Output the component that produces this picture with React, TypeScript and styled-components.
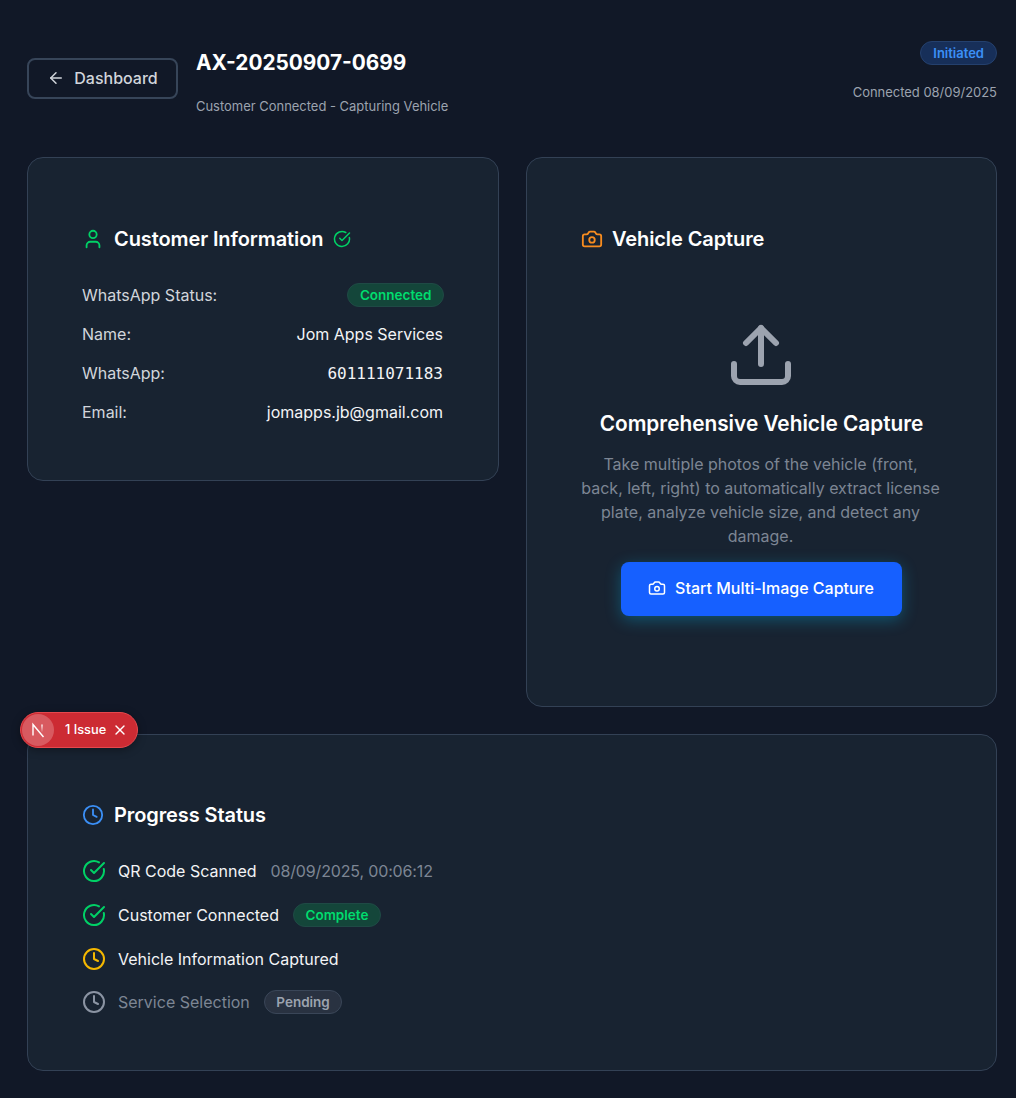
import React from "react";
import styled, { createGlobalStyle } from "styled-components";
import { ArrowLeft, Camera, CircleCheckBig, Clock, Upload, User, X } from "lucide-react";

const GlobalStyle = createGlobalStyle`
  html, body {
    margin: 0;
    padding: 0;
    background: #111827;
  }
  * {
    box-sizing: border-box;
  }
`;

const Page = styled.div`
  width: 1016px;
  height: 1098px;
  padding: 41px 19px 27px 27px;
  background: #111827;
  font-family: Inter, "Liberation Sans", sans-serif;
  color: #ffffff;
  position: relative;
  overflow: hidden;
`;

const Header = styled.header`
  display: flex;
  justify-content: space-between;
  height: 116px;
`;

const HeaderLeft = styled.div`
  display: flex;
  align-items: flex-start;
  gap: 18px;
`;

const BackButton = styled.button`
  width: 151px;
  height: 41px;
  margin-top: 17px;
  padding: 0 0 2px;
  display: flex;
  align-items: center;
  justify-content: center;
  gap: 9px;
  background: transparent;
  border: 2px solid #374559;
  border-radius: 8px;
  color: #d1d5db;
  font-family: inherit;
  font-size: 16px;
  font-weight: 500;
`;

const Title = styled.h1`
  margin: 7px 0 0;
  font-size: 20.8px;
  line-height: 30px;
  font-weight: 700;
`;

const Subtitle = styled.p`
  margin: 20px 0 0;
  font-size: 12.96px;
  line-height: 16px;
  color: #9ca3af;
`;

const HeaderRight = styled.div`
  display: flex;
  flex-direction: column;
  align-items: flex-end;
`;

const Meta = styled.span`
  margin-top: 17px;
  font-size: 12.96px;
  line-height: 20px;
  color: #9ca3af;
`;

const Columns = styled.div`
  display: grid;
  grid-template-columns: 472px 471px;
  gap: 27px;
  align-items: start;
`;

const Card = styled.section<{ $height: number }>`
  height: ${(p) => p.$height}px;
  padding: 66px 54px 0;
  background: #182331;
  border: 1px solid #334155;
  border-radius: 16px;
`;

const ProgressCard = styled(Card)`
  margin-top: 27px;
  padding-top: 65px;
`;

const CardTitle = styled.h2`
  margin: 0;
  height: 30px;
  display: flex;
  align-items: center;
  font-size: 20px;
  font-weight: 600;
  letter-spacing: -0.1px;
`;

const TitleIcon = styled.span<{ $color: string; $gap: number }>`
  display: flex;
  margin-right: ${(p) => p.$gap}px;
  color: ${(p) => p.$color};
`;

const TitleBadge = styled.span`
  display: flex;
  margin-left: 10px;
  color: #00d166;
`;

const InfoList = styled.dl`
  margin: 21px 0 0;
`;

const InfoRow = styled.div`
  height: 39px;
  display: flex;
  align-items: center;
  justify-content: space-between;
`;

const InfoLabel = styled.dt`
  font-size: 16px;
  color: #d1d5db;
`;

const InfoValue = styled.dd`
  margin: 0 1px 0 0;
  font-size: 16px;
  color: #f3f4f6;
`;

const MonoValue = styled(InfoValue)`
  padding-top: 1px;
  font-family: "DejaVu Sans Mono", monospace;
`;

const PillValue = styled.dd`
  margin: 0;
`;

const Pill = styled.span<{ $tone: "green" | "blue" | "gray" }>`
  display: inline-flex;
  align-items: center;
  height: 24px;
  padding: 0 11.5px;
  border-radius: 999px;
  font-size: 13.5px;
  font-weight: 600;
  border: 1px solid
    ${(p) =>
      p.$tone === "green" ? "#1f4a45" : p.$tone === "blue" ? "#24406d" : "#3a4658"};
  background: ${(p) =>
    p.$tone === "green" ? "#14463a" : p.$tone === "blue" ? "#172f59" : "#293241"};
  color: ${(p) =>
    p.$tone === "green" ? "#00dc6e" : p.$tone === "blue" ? "#3b8ff6" : "#9ca3af"};
`;

const StatusPill = styled(Pill)`
  padding: 0 12px;
  font-size: 13px;
`;

const CaptureBody = styled.div`
  margin-top: 65px;
  display: flex;
  flex-direction: column;
  align-items: center;
  text-align: center;
`;

const UploadIcon = styled.span`
  display: flex;
  margin-left: -1px;
  color: #9ca3af;
`;

const CaptureTitle = styled.h3`
  margin: 18px 0 0;
  font-size: 20.8px;
  line-height: 30px;
  font-weight: 600;
`;

const CaptureText = styled.p`
  margin: 13px -2px 0 -4px;
  font-size: 16px;
  line-height: 24px;
  color: #7d8694;
`;

const CaptureButton = styled.button`
  width: 281px;
  height: 54px;
  margin-top: 14px;
  padding: 0 1px 2px 0;
  display: flex;
  align-items: center;
  justify-content: center;
  gap: 9px;
  background: #1660ff;
  border: none;
  border-radius: 8px;
  color: #ffffff;
  font-family: inherit;
  font-size: 16px;
  font-weight: 500;
  box-shadow: 0 4px 16px rgba(0, 200, 255, 0.3);
`;

const Steps = styled.ul`
  list-style: none;
  margin: 19px 0 0;
  padding: 0;
`;

const Step = styled.li`
  height: 44px;
  display: flex;
  align-items: center;

  &:last-child {
    margin-top: -1px;
  }
`;

const StepIcon = styled.span<{ $color: string }>`
  display: flex;
  margin-right: 12px;
  color: ${(p) => p.$color};
`;

const StepLabel = styled.span<{ $muted?: boolean }>`
  font-size: 16px;
  color: ${(p) => (p.$muted ? "#7d8694" : "#f3f4f6")};
`;

const StepNote = styled.span`
  margin-left: 14px;
  font-size: 16px;
  letter-spacing: -0.15px;
  color: #7d8694;
`;

const StepPill = styled(Pill)`
  margin-left: 14px;
`;

const IssueBadge = styled.div`
  position: absolute;
  left: 20px;
  top: 712px;
  width: 118px;
  height: 36px;
  display: flex;
  align-items: center;
  padding: 0 9px 0 1px;
  background: #cc2b33;
  border: 1px solid #e5484d;
  border-radius: 18px;
  box-shadow: 0 2px 8px rgba(0, 0, 0, 0.35);
  font-size: 12.8px;
  font-weight: 500;
`;

const IssueLogo = styled.span`
  width: 32px;
  height: 32px;
  margin-right: 11px;
  display: flex;
  align-items: center;
  justify-content: center;
  border-radius: 50%;
  background: #d85a60;
`;

const IssueText = styled.span`
  flex: 1;
  margin-top: -2px;
`;

const NextMark = () => (
  <svg width="16" height="16" viewBox="0 0 16 16" fill="none">
    <defs>
      <linearGradient id="markFade" x1="0" y1="0" x2="0" y2="1">
        <stop offset="0" stopColor="#fff" />
        <stop offset="1" stopColor="#fff" stopOpacity="0" />
      </linearGradient>
    </defs>
    <path d="M3 13.5V2.5L13.5 15" stroke="#fff" strokeWidth="1.4" />
    <rect x="11.3" y="2.5" width="1.4" height="8" fill="url(#markFade)" />
  </svg>
);

const App = () => {
  return (
    <Page>
      <GlobalStyle />
      <Header>
        <HeaderLeft>
          <BackButton>
            <ArrowLeft size={18} color="#d1d5db" />
            Dashboard
          </BackButton>
          <div>
            <Title>AX-20250907-0699</Title>
            <Subtitle>Customer Connected - Capturing Vehicle</Subtitle>
          </div>
        </HeaderLeft>
        <HeaderRight>
          <StatusPill $tone="blue">Initiated</StatusPill>
          <Meta>Connected 08/09/2025</Meta>
        </HeaderRight>
      </Header>

      <Columns>
        <Card $height={324}>
          <CardTitle>
            <TitleIcon $color="#00d166" $gap={10}><User size={22} /></TitleIcon>
            Customer Information
            <TitleBadge><CircleCheckBig size={18} /></TitleBadge>
          </CardTitle>
          <InfoList>
            <InfoRow>
              <InfoLabel>WhatsApp Status:</InfoLabel>
              <PillValue><Pill $tone="green">Connected</Pill></PillValue>
            </InfoRow>
            <InfoRow>
              <InfoLabel>Name:</InfoLabel>
              <InfoValue>Jom Apps Services</InfoValue>
            </InfoRow>
            <InfoRow>
              <InfoLabel>WhatsApp:</InfoLabel>
              <MonoValue>601111071183</MonoValue>
            </InfoRow>
            <InfoRow>
              <InfoLabel>Email:</InfoLabel>
              <InfoValue>jomapps.jb@gmail.com</InfoValue>
            </InfoRow>
          </InfoList>
        </Card>

        <Card $height={550}>
          <CardTitle>
            <TitleIcon $color="#f78c1f" $gap={9}><Camera size={22} /></TitleIcon>
            Vehicle Capture
          </CardTitle>
          <CaptureBody>
            <UploadIcon><Upload size={72} strokeWidth={2} /></UploadIcon>
            <CaptureTitle>Comprehensive Vehicle Capture</CaptureTitle>
            <CaptureText>
              Take multiple photos of the vehicle (front,<br />
              back, left, right) to automatically extract license<br />
              plate, analyze vehicle size, and detect any<br />
              damage.
            </CaptureText>
            <CaptureButton>
              <Camera size={18} />
              Start Multi-Image Capture
            </CaptureButton>
          </CaptureBody>
        </Card>
      </Columns>

      <ProgressCard $height={337}>
        <CardTitle>
          <TitleIcon $color="#3b8ff6" $gap={10}><Clock size={22} /></TitleIcon>
          Progress Status
        </CardTitle>
        <Steps>
          <Step>
            <StepIcon $color="#00d166"><CircleCheckBig size={24} /></StepIcon>
            <StepLabel>QR Code Scanned</StepLabel>
            <StepNote>08/09/2025, 00:06:12</StepNote>
          </Step>
          <Step>
            <StepIcon $color="#00d166"><CircleCheckBig size={24} /></StepIcon>
            <StepLabel>Customer Connected</StepLabel>
            <StepPill $tone="green">Complete</StepPill>
          </Step>
          <Step>
            <StepIcon $color="#f5b800"><Clock size={24} /></StepIcon>
            <StepLabel>Vehicle Information Captured</StepLabel>
          </Step>
          <Step>
            <StepIcon $color="#8b94a3"><Clock size={24} /></StepIcon>
            <StepLabel $muted>Service Selection</StepLabel>
            <StepPill $tone="gray">Pending</StepPill>
          </Step>
        </Steps>
      </ProgressCard>

      <IssueBadge>
        <IssueLogo><NextMark /></IssueLogo>
        <IssueText>1 Issue</IssueText>
        <X size={16} />
      </IssueBadge>
    </Page>
  );
};

export default App;
